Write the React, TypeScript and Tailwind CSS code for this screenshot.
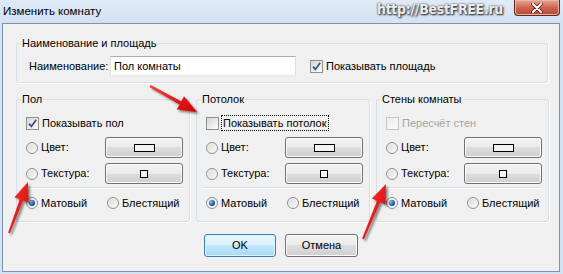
import type { ReactNode } from "react";

function Radio({ checked }: { checked?: boolean }) {
  return (
    <span className="grid h-[12px] w-[12px] shrink-0 place-items-center rounded-full border border-[#8e8f8f] bg-gradient-to-br from-[#d9d9d9] to-[#fbfbfb] shadow-[inset_0_0_0_1px_#f4f4f4]">
      {checked && (
        <span className="h-[6px] w-[6px] rounded-full bg-[radial-gradient(circle_at_35%_35%,#8cc2f0,#1a4f9e_60%,#0b2d66)]" />
      )}
    </span>
  );
}

function Check({ checked, disabled }: { checked?: boolean; disabled?: boolean }) {
  return (
    <span
      className={
        disabled
          ? "grid h-[13px] w-[13px] shrink-0 place-items-center border border-[#c4c4c4] bg-gradient-to-br from-[#ececec] to-[#fafafa]"
          : "grid h-[13px] w-[13px] shrink-0 place-items-center border border-[#8e8f8f] bg-gradient-to-br from-[#d6d6d6] to-[#fdfdfd]"
      }
    >
      {checked && (
        <svg width="9" height="9" viewBox="0 0 9 9">
          <path d="M1 4.6 L3.4 7.4 L8.2 0.8" stroke="#3a4f86" strokeWidth="1.7" fill="none" />
        </svg>
      )}
    </span>
  );
}

function VBtn({ children, className = "", focused }: { children: ReactNode; className?: string; focused?: boolean }) {
  return (
    <button
      type="button"
      className={
        (focused
          ? "border-[#3c7fb1] bg-[linear-gradient(#eaf6fd_0%,#d9f0fc_50%,#bee6fd_50%,#a7d9f5_100%)] shadow-[inset_0_0_0_1px_#ddf1fc] "
          : "border-[#707070] bg-[linear-gradient(#f2f2f2_0%,#ebebeb_50%,#dddddd_50%,#cfcfcf_100%)] shadow-[inset_0_0_0_1px_#fbfbfb] ") +
        "flex items-center justify-center rounded-[3px] border " +
        className
      }
    >
      {children}
    </button>
  );
}

function Group({ title, children, className = "" }: { title: string; children: ReactNode; className?: string }) {
  return (
    <fieldset className={"min-w-0 rounded-[3px] border border-[#d5dfe5] shadow-[1px_1px_0_#ffffff] " + className}>
      <legend className="ml-[4px] px-px leading-[15px]">{title}</legend>
      {children}
    </fieldset>
  );
}

function SurfaceGroup({
  title,
  label,
  checked,
  disabled,
  focus,
  className = "",
}: {
  title: string;
  label: string;
  checked?: boolean;
  disabled?: boolean;
  focus?: boolean;
  className?: string;
}) {
  return (
    <Group title={title} className={className}>
      <div className="flex flex-col pb-[10px] pl-[9px] pr-[6px] pt-[8px]">
        <div className="flex h-[16px] items-center">
          <Check checked={checked} disabled={disabled} />
          <span
            className={
              (disabled ? "text-[#a3a3a3] " : "") +
              (focus ? "ml-[2px] border border-dotted border-black px-px leading-[14px]" : "ml-[3px]")
            }
          >
            {label}
          </span>
        </div>
        <div className="mt-[6px] flex h-[21px] items-center">
          <Radio />
          <span className="ml-[3px]">Цвет:</span>
          <VBtn className="ml-auto h-[21px] w-[78px]">
            <span className="h-[8px] w-[21px] border border-black bg-[#f4f4f4]" />
          </VBtn>
        </div>
        <div className="mt-[5px] flex h-[21px] items-center">
          <Radio />
          <span className="ml-[3px]">Текстура:</span>
          <VBtn className="ml-auto h-[21px] w-[78px]">
            <span className="h-[8px] w-[8px] border border-black bg-[#f4f4f4]" />
          </VBtn>
        </div>
        <div className="-ml-[4px] mt-[3px] h-px bg-[#d5dfe5] shadow-[0_1px_0_#ffffff]" />
        <div className="mt-[7px] flex h-[16px] items-center">
          <div className="flex w-[81px] items-center">
            <Radio checked />
            <span className="ml-[3px]">Матовый</span>
          </div>
          <Radio />
          <span className="ml-[3px]">Блестящий</span>
        </div>
      </div>
    </Group>
  );
}

function arrowPoints(x1: number, y1: number, x2: number, y2: number) {
  const len = Math.hypot(x2 - x1, y2 - y1);
  const dx = (x2 - x1) / len;
  const dy = (y2 - y1) / len;
  const nx = -dy;
  const ny = dx;
  const L = 19;
  const W = 7.5;
  const s = 1.8;
  const t = 1;
  const bx = x2 - dx * L;
  const by = y2 - dy * L;
  const p = [
    [x1 + nx * t, y1 + ny * t],
    [bx + nx * s, by + ny * s],
    [bx + nx * W, by + ny * W],
    [x2, y2],
    [bx - nx * W, by - ny * W],
    [bx - nx * s, by - ny * s],
    [x1 - nx * t, y1 - ny * t],
  ];
  return p.map((q) => q.map((v) => v.toFixed(1)).join(",")).join(" ");
}

const ARROWS = [
  [150, 86, 197, 112],
  [9, 233, 28, 182],
  [363, 239, 386, 184],
];

function Arrows() {
  return (
    <svg className="pointer-events-none absolute inset-0" width="563" height="274">
      <defs>
        <filter id="sh" x="-20%" y="-20%" width="140%" height="140%">
          <feGaussianBlur stdDeviation="1.2" />
        </filter>
        <linearGradient id="rg" x1="0" y1="0" x2="1" y2="1">
          <stop offset="0" stopColor="#ff3a3a" />
          <stop offset="1" stopColor="#d40000" />
        </linearGradient>
      </defs>
      {ARROWS.map(([x1, y1, x2, y2], i) => (
        <g key={i}>
          <polygon points={arrowPoints(x1 + 2, y1 + 2, x2 + 2, y2 + 2)} fill="rgba(0,0,0,0.45)" filter="url(#sh)" />
          <polygon points={arrowPoints(x1, y1, x2, y2)} fill="url(#rg)" />
        </g>
      ))}
    </svg>
  );
}

export default function App() {
  return (
    <div className="relative flex h-[274px] w-[563px] flex-col overflow-hidden bg-[#d3e2f2] font-['Liberation_Sans',Arial,sans-serif] text-[11px] leading-[15px] text-black">
      {/* title bar */}
      <div className="flex h-[23px] shrink-0 bg-gradient-to-b from-[#dfeaf7] to-[#d3e2f2]">
        <span className="ml-[3px] mt-[4px] text-[11.5px]">Изменить комнату</span>
        <span className="ml-auto mt-[2px] font-['DejaVu_Sans_Condensed','DejaVu_Sans',sans-serif] text-[14px] font-bold tracking-[-0.3px] text-[#ececec] [text-shadow:0_0_2px_#333,1px_1px_2px_#222]">
          http://BestFREE.ru
        </span>
        <button
          type="button"
          className="ml-[11px] mr-[3px] flex h-[16px] w-[46px] items-center justify-center rounded-b-[4px] border border-t-0 border-[#5a2a20] bg-gradient-to-b from-[#e6a898] via-[#cf6553] to-[#b8452f] shadow-[inset_0_0_0_1px_#e9b3a5]"
        >
          <svg width="12" height="10" viewBox="0 0 12 10">
            <path d="M2 1 L10 9 M10 1 L2 9" stroke="#4a1a10" strokeWidth="3.6" strokeLinecap="round" />
            <path d="M2 1 L10 9 M10 1 L2 9" stroke="#ffffff" strokeWidth="2" strokeLinecap="round" />
          </svg>
        </button>
      </div>

      {/* client area */}
      <div className="mb-[2px] ml-[2px] mr-[3px] flex flex-1 flex-col border border-[#7b93b0] bg-[#f0f0f0] pl-[13px] pt-[12px]">
        <Group title="Наименование и площадь" className="w-[532px]">
          <div className="flex items-center pb-[6px] pl-[12px] pt-[5px]">
            <span className="w-[81px]">Наименование:</span>
            <div className="flex h-[20px] w-[186px] items-center border border-[#abadb3] border-b-[#e3e9ef] border-l-[#e2e3ea] border-r-[#dbdfe6] bg-white pl-[3px]">
              Пол комнаты
            </div>
            <div className="ml-[14px] flex items-center">
              <Check checked />
              <span className="ml-[3px]">Показывать площадь</span>
            </div>
          </div>
        </Group>

        <div className="mt-[9px] flex gap-[6px]">
          <SurfaceGroup title="Пол" label="Показывать пол" checked className="w-[174px]" />
          <SurfaceGroup title="Потолок" label="Показывать потолок" focus className="w-[174px]" />
          <SurfaceGroup title="Стены комнаты" label="Пересчёт стен" disabled className="w-[173px]" />
        </div>

        <div className="mt-[12px] flex justify-center gap-[9px] pr-[13px]">
          <VBtn focused className="h-[23px] w-[72px]">
            OK
          </VBtn>
          <VBtn className="h-[23px] w-[73px]">Отмена</VBtn>
        </div>
      </div>

      <Arrows />
    </div>
  );
}
